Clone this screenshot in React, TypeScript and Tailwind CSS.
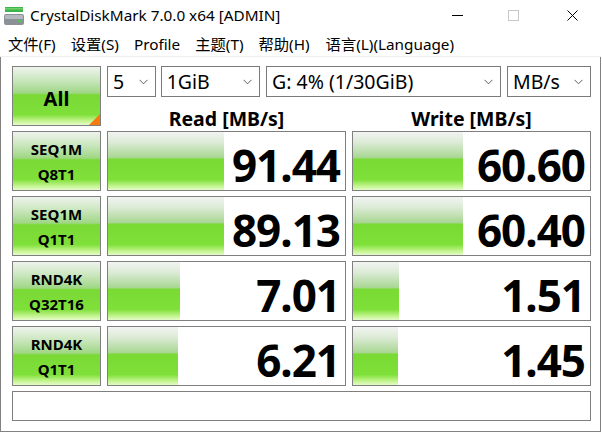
import React from "react";

const font = { fontFamily: '"Noto Sans", "Noto Sans CJK SC", sans-serif' };

const rows = [
  { l1: "SEQ1M", l2: "Q8T1", read: "91.44", readW: 116, write: "60.60", writeW: 110 },
  { l1: "SEQ1M", l2: "Q1T1", read: "89.13", readW: 116, write: "60.40", writeW: 110 },
  { l1: "RND4K", l2: "Q32T16", read: "7.01", readW: 72, write: "1.51", writeW: 46 },
  { l1: "RND4K", l2: "Q1T1", read: "6.21", readW: 70, write: "1.45", writeW: 45 },
];

const Chevron = () => (
  <svg width="9" height="6" viewBox="0 0 9 6" className="shrink-0">
    <path d="M0.5 0.8 L4.5 4.8 L8.5 0.8" fill="none" stroke="#606060" strokeWidth="1" />
  </svg>
);

const Select = ({ text, w }: { text: string; w: string }) => (
  <div className={`${w} h-[31px] border border-[#7a7a7a] bg-white flex items-center justify-between pl-[5px] pr-[7px]`}>
    <span className="text-[19.5px] leading-none text-black">{text}</span>
    <Chevron />
  </div>
);

const Cell = ({ value, barW }: { value: string; barW: number }) => (
  <div className="relative h-[60px] border border-[#7f7f7f] bg-white flex items-center justify-end pr-[5px]">
    <div
      className="absolute left-0 top-0 bottom-0 bg-[linear-gradient(to_bottom,#f2f4f2_0%,#dcebd6_18%,#a9d793_44%,#79da33_47%,#7ee039_82%,#c2f48c_93%,#e4fbc9_100%)]"
      style={{ width: barW }}
    />
    <span className="relative text-[44px] font-bold leading-none tracking-[-1px] text-black mt-[7px]">{value}</span>
  </div>
);

const Label = ({ a, b }: { a: string; b: string }) => (
  <div className="h-[60px] border border-[#7f7f7f] bg-[linear-gradient(to_bottom,#eef3ec_0%,#cfe8c4_20%,#9fd785_45%,#7ad935_48%,#80e03a_82%,#c4f48f_93%,#e6fbcc_100%)] flex flex-col items-center justify-center gap-[10px] pt-[2px]">
    <span className="text-[15px] font-bold leading-none text-black">{a}</span>
    <span className="text-[15px] font-bold leading-none text-black">{b}</span>
  </div>
);

export default function App() {
  return (
    <div className="w-[602px] h-[433px] bg-white overflow-hidden" style={font}>
      <div className="w-[601px] h-[432px] flex flex-col bg-white">
        {/* title bar */}
        <div className="h-[31px] flex items-center shrink-0">
          <svg width="21" height="19" viewBox="0 0 21 19" className="ml-[4px] mt-[1px]">
            <rect x="1" y="0" width="18" height="5" fill="#3cb44a" />
            <rect x="1" y="1" width="18" height="1.5" fill="#6fd06c" />
            <rect x="0" y="7" width="20" height="11" rx="2" fill="#8c9097" />
            <rect x="1" y="8" width="18" height="4" rx="1" fill="#b5b9bf" />
            <rect x="14" y="13" width="4" height="2" fill="#50c850" />
          </svg>
          <span className="ml-[5px] text-[15.3px] text-black">CrystalDiskMark 7.0.0 x64 [ADMIN]</span>
          <div className="ml-auto flex items-center h-full">
            <div className="w-[46px] h-full flex items-center justify-center">
              <svg width="11" height="1" viewBox="0 0 11 1"><rect width="11" height="1" fill="#000" /></svg>
            </div>
            <div className="w-[46px] ml-[10px] h-full flex items-center justify-center">
              <svg width="11" height="11" viewBox="0 0 11 11"><rect x="0.5" y="0.5" width="10" height="10" fill="none" stroke="#c8c8c8" /></svg>
            </div>
            <div className="w-[46px] ml-[13px] mr-[6px] h-full flex items-center justify-center">
              <svg width="11" height="11" viewBox="0 0 11 11"><path d="M0.5 0.5 L10.5 10.5 M10.5 0.5 L0.5 10.5" stroke="#000" strokeWidth="1" /></svg>
            </div>
          </div>
        </div>
        {/* menu bar */}
        <div className="h-[26px] flex items-center border-b border-[#eeeeee] shrink-0 text-[15.3px] text-black pt-[2px]">
          <span className="ml-[8px]">文件(F)</span>
          <span className="ml-[15px]">设置(S)</span>
          <span className="ml-[15px]">Profile</span>
          <span className="ml-[15px]">主题(T)</span>
          <span className="ml-[15px]">帮助(H)</span>
          <span className="ml-[16px]">语言(L)(Language)</span>
        </div>
        {/* client */}
        <div className="flex-1 border-x border-b border-[#828282] pl-[11px] pt-[9px]">
          <div className="grid grid-cols-[89px_239px_239px] gap-x-[6px] gap-y-[5px]">
            <div className="relative h-[60px] border border-[#7f7f7f] bg-[linear-gradient(to_bottom,#eef3ec_0%,#cfe8c4_20%,#9fd785_45%,#7ad935_48%,#80e03a_82%,#c4f48f_93%,#e6fbcc_100%)] flex items-center justify-center">
              <span className="text-[20px] font-bold leading-none text-black mt-[5px]">All</span>
              <div className="absolute right-0 bottom-0 w-0 h-0 border-l-[11px] border-l-transparent border-b-[11px] border-b-[#f77a0c]" />
            </div>
            <div className="col-span-2 h-[60px] flex flex-col">
              <div className="flex gap-[5px]">
                <Select text="5" w="w-[49px]" />
                <Select text="1GiB" w="w-[100px]" />
                <div className="ml-[1px]">
                  <Select text="G: 4% (1/30GiB)" w="w-[235px]" />
                </div>
                <div className="ml-[1px]">
                  <Select text="MB/s" w="w-[84px]" />
                </div>
              </div>
              <div className="flex-1 grid grid-cols-[239px_239px] gap-x-[6px] items-end">
                <div className="text-center text-[19.5px] font-bold leading-none text-black mb-[-2px]">Read [MB/s]</div>
                <div className="text-center text-[19.5px] font-bold leading-none text-black mb-[-2px]">Write [MB/s]</div>
              </div>
            </div>
            {rows.map((r, i) => (
              <React.Fragment key={i}>
                <Label a={r.l1} b={r.l2} />
                <Cell value={r.read} barW={r.readW} />
                <Cell value={r.write} barW={r.writeW} />
              </React.Fragment>
            ))}
            <div className="col-span-3 h-[30px] border border-[#7f7f7f] bg-white" />
          </div>
        </div>
      </div>
    </div>
  );
}
